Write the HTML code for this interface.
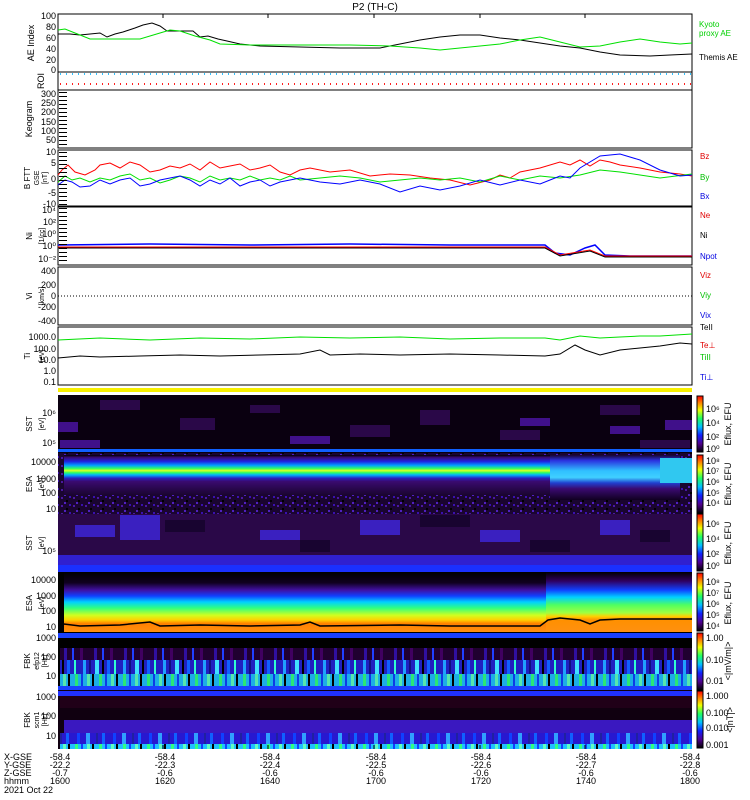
<!DOCTYPE html>
<html><head><meta charset="utf-8"><style>
html,body{margin:0;padding:0;background:#fff;}
svg{display:block;font-family:"Liberation Sans",sans-serif;}
text{font-size:9px;fill:#000;}
</style></head><body>
<svg width="750" height="800" viewBox="0 0 750 800" xmlns="http://www.w3.org/2000/svg">
<defs>
<linearGradient id="esai" x1="0" y1="0" x2="0" y2="1">
<stop offset="0" stop-color="#000"/><stop offset="0.06" stop-color="#3a0a70"/><stop offset="0.16" stop-color="#2020e0"/>
<stop offset="0.26" stop-color="#00a0ff"/><stop offset="0.34" stop-color="#30ff60"/><stop offset="0.39" stop-color="#e0ff20"/>
<stop offset="0.44" stop-color="#30ff60"/><stop offset="0.5" stop-color="#00b0ff"/><stop offset="0.58" stop-color="#2a20c0"/>
<stop offset="0.66" stop-color="#3a0a70"/><stop offset="1" stop-color="#1a0530"/></linearGradient>
<linearGradient id="esai2" x1="0" y1="0" x2="0" y2="1">
<stop offset="0" stop-color="#1a0530"/><stop offset="0.12" stop-color="#2a30e0"/><stop offset="0.35" stop-color="#30c0ff"/>
<stop offset="0.5" stop-color="#40d0ff"/><stop offset="0.62" stop-color="#2040d0"/><stop offset="0.75" stop-color="#3a0a70"/><stop offset="1" stop-color="#100020"/></linearGradient>
<linearGradient id="esae" x1="0" y1="0" x2="0" y2="1">
<stop offset="0" stop-color="#000"/><stop offset="0.18" stop-color="#100020"/><stop offset="0.3" stop-color="#4010a0"/>
<stop offset="0.4" stop-color="#1040ff"/><stop offset="0.5" stop-color="#00d0ff"/><stop offset="0.6" stop-color="#30ff80"/>
<stop offset="0.72" stop-color="#d0ff20"/><stop offset="0.8" stop-color="#ffd000"/><stop offset="0.86" stop-color="#ff8000"/><stop offset="1" stop-color="#ff9010"/></linearGradient>
<linearGradient id="esae2" x1="0" y1="0" x2="0" y2="1">
<stop offset="0" stop-color="#000"/><stop offset="0.15" stop-color="#300060"/><stop offset="0.3" stop-color="#1040ff"/>
<stop offset="0.42" stop-color="#00d0ff"/><stop offset="0.55" stop-color="#50ff60"/><stop offset="0.68" stop-color="#a0ff40"/>
<stop offset="0.74" stop-color="#ffd000"/><stop offset="0.8" stop-color="#ff9000"/><stop offset="1" stop-color="#ff9010"/></linearGradient>
<linearGradient id="cb1" x1="0" y1="1" x2="0" y2="0">
<stop offset="0" stop-color="#000"/><stop offset="0.15" stop-color="#500090"/><stop offset="0.3" stop-color="#1020ff"/>
<stop offset="0.45" stop-color="#00c0ff"/><stop offset="0.6" stop-color="#20ff60"/><stop offset="0.75" stop-color="#f0ff00"/>
<stop offset="0.88" stop-color="#ff8000"/><stop offset="1" stop-color="#ff0000"/></linearGradient>
<pattern id="fbk" width="40" height="10" patternUnits="userSpaceOnUse">
<rect width="40" height="10" fill="#2020c0"/><rect x="3" width="3" height="10" fill="#20a0ff"/><rect x="9" width="2" height="10" fill="#101080"/>
<rect x="15" width="4" height="10" fill="#40e0ff"/><rect x="22" width="2" height="10" fill="#000"/><rect x="27" width="3" height="10" fill="#1060ff"/><rect x="34" width="2" height="10" fill="#30ffd0"/></pattern>
<pattern id="fbkp" width="30" height="10" patternUnits="userSpaceOnUse">
<rect width="30" height="10" fill="#200030"/><rect x="4" width="3" height="10" fill="#3010a0"/><rect x="12" width="2" height="10" fill="#2040ff"/><rect x="20" width="3" height="10" fill="#400060"/></pattern>
<pattern id="fbkg" width="24" height="10" patternUnits="userSpaceOnUse">
<rect width="24" height="10" fill="#20c0ff"/><rect x="3" width="3" height="10" fill="#30ff80"/><rect x="9" width="2" height="10" fill="#1040ff"/><rect x="15" width="3" height="10" fill="#60ffc0"/><rect x="20" width="2" height="10" fill="#000"/></pattern>
<pattern id="fbk2" width="36" height="10" patternUnits="userSpaceOnUse">
<rect width="36" height="10" fill="#2818d0"/><rect x="5" width="3" height="10" fill="#1040ff"/><rect x="14" width="4" height="10" fill="#30a0ff"/><rect x="24" width="2" height="10" fill="#2020a0"/><rect x="30" width="3" height="10" fill="#1060ff"/></pattern>
<pattern id="noise" width="12" height="8" patternUnits="userSpaceOnUse">
<rect width="12" height="8" fill="#1a0530"/><rect x="1" y="1" width="2" height="2" fill="#4a18a0"/><rect x="6" y="4" width="2" height="2" fill="#000"/><rect x="9" y="0" width="2" height="2" fill="#3a10b0"/><rect x="4" y="6" width="2" height="2" fill="#5020c0"/></pattern>
<pattern id="ytk" width="8" height="4" patternUnits="userSpaceOnUse"><rect y="0" width="8" height="1" fill="#000"/></pattern>
</defs>

<text x="375" y="10" text-anchor="middle" style="font-size:10px">P2 (TH-C)</text>

<!-- AE panel -->
<rect x="58" y="14" width="634" height="58" fill="#fff" stroke="#000"/>
<polyline fill="none" stroke="#000" points="58,34 70,34 80,35 100,33 107,37 115,34 123,32 135,28 143,25 152,23 160,26 167,31 180,31 193,31 200,37 208,36 218,39 227,41 240,44 260,46 300,47 340,48 380,48 400,44 420,40 440,37 460,35 480,35 500,38 520,40 540,43 560,46 580,48 600,52 620,55 650,56 670,55 692,54"/>
<polyline fill="none" stroke="#00e000" points="58,30 65,29 75,33 90,39 140,39 160,33 170,30 180,31 195,36 210,40 220,44 250,45 300,45 350,45 390,46 420,48 440,50 470,47 500,44 520,40 540,37 560,42 580,47 600,46 620,42 640,39 660,42 680,44 692,43"/>
<g text-anchor="end"><text x="56" y="19">100</text><text x="56" y="30">80</text><text x="56" y="41">60</text><text x="56" y="52">40</text><text x="56" y="63">20</text><text x="56" y="73">0</text></g>
<text transform="translate(34,43) rotate(-90)" text-anchor="middle">AE Index</text>
<text x="699" y="27" style="fill:#00d000;font-size:8px">Kyoto</text>
<text x="699" y="36" style="fill:#00d000;font-size:8px">proxy AE</text>
<text x="699" y="60" style="font-size:8px">Themis AE</text>

<!-- ROI -->
<rect x="58" y="72" width="634" height="18" fill="#fff" stroke="#000"/>
<line x1="60" y1="74" x2="692" y2="74" stroke="#30c0ff" stroke-dasharray="1,5" stroke-width="2"/>
<line x1="60" y1="84" x2="692" y2="84" stroke="#ff2020" stroke-dasharray="1,5" stroke-width="2"/>
<text transform="translate(44,81) rotate(-90)" text-anchor="middle">ROI</text>

<!-- Keogram -->
<rect x="58" y="90" width="634" height="58" fill="#fff" stroke="#000"/>
<rect x="59" y="91" width="8" height="56" fill="url(#ytk)"/>
<g text-anchor="end"><text x="56" y="97">300</text><text x="56" y="106">250</text><text x="56" y="115">200</text><text x="56" y="125">150</text><text x="56" y="134">100</text><text x="56" y="143">50</text></g>
<text transform="translate(32,119) rotate(-90)" text-anchor="middle">Keogram</text>

<!-- B FTT -->
<rect x="58" y="150" width="634" height="56" fill="#fff" stroke="#000"/>
<polyline fill="none" stroke="#ff0000" points="58,175 62,170 68,165 75,172 85,175 95,170 100,165 110,163 120,168 130,162 140,165 150,172 160,170 170,166 180,168 190,164 200,170 210,162 220,168 230,166 240,164 250,170 260,168 270,165 280,172 290,175 300,170 310,168 330,172 350,170 370,176 390,174 410,175 430,178 450,180 470,185 490,180 500,175 510,178 520,172 540,168 560,162 570,165 580,160 590,166 600,160 610,162 620,165 640,168 660,172 680,174 692,176"/>
<polyline fill="none" stroke="#00e000" points="58,182 65,176 72,180 80,178 90,182 100,178 110,180 120,176 130,174 140,180 150,178 160,183 170,180 180,176 190,178 200,182 210,176 220,180 230,178 240,180 250,176 260,180 270,178 280,180 290,176 300,180 320,178 340,176 360,178 380,182 400,180 420,178 440,180 460,178 480,182 500,176 520,180 540,176 560,178 580,175 600,170 620,172 640,175 660,178 692,174"/>
<polyline fill="none" stroke="#0000ff" points="58,185 65,180 72,182 80,187 90,186 100,180 110,184 120,180 130,178 140,186 150,184 160,180 170,178 180,176 190,180 200,186 210,180 220,184 230,178 240,186 250,182 260,180 270,186 280,182 290,180 300,178 320,182 340,184 360,180 380,184 400,192 420,186 440,190 460,186 480,180 500,185 520,180 540,184 550,180 560,176 570,178 580,168 600,156 620,154 640,160 660,170 680,176 692,175"/>
<rect x="59" y="151" width="8" height="54" fill="url(#ytk)"/>
<g text-anchor="end"><text x="56" y="155">10</text><text x="56" y="166">5</text><text x="56" y="182">0</text><text x="56" y="196">-5</text><text x="56" y="207">-10</text></g>
<text transform="translate(30,178) rotate(-90)" text-anchor="middle" style="font-size:8px">B FTT</text>
<text transform="translate(39,178) rotate(-90)" text-anchor="middle" style="font-size:7px">GSE</text>
<text transform="translate(47,178) rotate(-90)" text-anchor="middle" style="font-size:7px">[nT]</text>
<text x="700" y="159" style="fill:#e00000;font-size:8px">Bz</text>
<text x="700" y="180" style="fill:#00c000;font-size:8px">By</text>
<text x="700" y="199" style="fill:#0000e0;font-size:8px">Bx</text>

<!-- Ni -->
<rect x="58" y="207" width="634" height="58" fill="#fff" stroke="#000"/>
<polyline fill="none" stroke="#0000ff" stroke-width="1.5" points="58,245 150,244 250,245 350,244 450,245 545,245 555,253 570,255 585,248 595,245 605,255 630,256 692,256"/>
<polyline fill="none" stroke="#ff0000" points="58,247 545,247 560,255 590,250 605,256 692,256"/>
<polyline fill="none" stroke="#000" points="58,248 545,248 560,256 590,251 605,257 692,257"/>
<rect x="59" y="208" width="8" height="56" fill="url(#ytk)"/>
<g text-anchor="end" style="font-size:8px"><text x="56" y="213">10⁴</text><text x="56" y="225">10²</text><text x="56" y="237">10⁰</text><text x="56" y="249">10⁰</text><text x="56" y="262">10⁻²</text></g>
<text transform="translate(32,236) rotate(-90)" text-anchor="middle" style="font-size:8px">Ni</text>
<text transform="translate(44,236) rotate(-90)" text-anchor="middle" style="font-size:7px">[1/cc]</text>
<text x="700" y="218" style="fill:#e00000;font-size:8px">Ne</text>
<text x="700" y="238" style="font-size:8px">Ni</text>
<text x="700" y="259" style="fill:#0000e0;font-size:8px">Npot</text>

<!-- Vi -->
<rect x="58" y="267" width="634" height="58" fill="#fff" stroke="#000"/>
<line x1="58" y1="296" x2="692" y2="296" stroke="#000" stroke-dasharray="1,2"/>
<g text-anchor="end"><text x="56" y="274">400</text><text x="56" y="288">200</text><text x="56" y="299">0</text><text x="56" y="310">-200</text><text x="56" y="324">-400</text></g>
<text transform="translate(32,296) rotate(-90)" text-anchor="middle" style="font-size:8px">Vi</text>
<text transform="translate(44,296) rotate(-90)" text-anchor="middle" style="font-size:7px">[km/s]</text>
<text x="700" y="278" style="fill:#e00000;font-size:8px">Viz</text>
<text x="700" y="298" style="fill:#00c000;font-size:8px">Viy</text>
<text x="700" y="318" style="fill:#0000e0;font-size:8px">Vix</text>

<!-- Ti -->
<rect x="58" y="327" width="634" height="58" fill="#fff" stroke="#000"/>
<polyline fill="none" stroke="#00e000" points="58,340 100,338 150,340 200,338 250,339 300,337 350,338 400,337 450,339 500,338 545,338 560,340 580,336 600,338 620,337 640,336 660,336 692,334"/>
<polyline fill="none" stroke="#000" points="58,358 80,356 100,357 140,356 180,355 220,356 260,355 300,354 320,350 330,355 360,354 400,355 450,354 500,355 545,356 560,354 575,345 585,350 600,355 620,350 640,348 660,346 680,343 692,344"/>
<g text-anchor="end" style="font-size:8px"><text x="56" y="340">1000.0</text><text x="56" y="352">100.0</text><text x="56" y="363">10.0</text><text x="56" y="374">1.0</text><text x="56" y="385">0.1</text></g>
<text transform="translate(30,356) rotate(-90)" text-anchor="middle" style="font-size:8px">Ti</text>
<text transform="translate(44,356) rotate(-90)" text-anchor="middle" style="font-size:7px">[eV]</text>
<text x="700" y="330" style="font-size:8px">TeII</text>
<text x="700" y="348" style="fill:#e00000;font-size:8px">Te⊥</text>
<text x="700" y="360" style="fill:#00c000;font-size:8px">TiII</text>
<text x="700" y="380" style="fill:#0000e0;font-size:8px">Ti⊥</text>

<!-- yellow bar -->
<rect x="58" y="388" width="634" height="4" fill="#f8f000"/>

<!-- SST ion -->
<rect x="58" y="395" width="634" height="58" fill="#0a0010"/>
<g fill="#2a0848">
<rect x="100" y="400" width="40" height="10"/><rect x="180" y="418" width="35" height="12"/><rect x="250" y="405" width="30" height="8"/><rect x="350" y="425" width="40" height="12"/><rect x="420" y="410" width="30" height="15"/><rect x="500" y="430" width="40" height="10"/><rect x="600" y="405" width="40" height="10"/><rect x="640" y="440" width="50" height="8"/>
</g>
<g fill="#40108a"><rect x="58" y="422" width="20" height="10"/><rect x="60" y="440" width="40" height="8"/><rect x="290" y="436" width="40" height="8"/><rect x="520" y="418" width="30" height="8"/><rect x="610" y="426" width="30" height="8"/><rect x="665" y="420" width="27" height="10"/></g>
<rect x="58" y="449" width="634" height="3" fill="#1060ff"/>
<g text-anchor="end" style="font-size:8px"><text x="56" y="416">10⁶</text><text x="56" y="446">10⁵</text></g>
<text transform="translate(32,424) rotate(-90)" text-anchor="middle" style="font-size:8px">SST</text>
<text transform="translate(44,424) rotate(-90)" text-anchor="middle" style="font-size:7px">[eV]</text>

<!-- ESA ion -->
<rect x="58" y="453" width="634" height="61" fill="url(#noise)"/>
<rect x="64" y="455" width="486" height="40" fill="url(#esai)" />
<rect x="64" y="495" width="486" height="19" fill="url(#noise)"/>
<rect x="550" y="455" width="130" height="45" fill="url(#esai2)"/>
<rect x="660" y="458" width="32" height="25" fill="#30c8f0"/>
<g text-anchor="end" style="font-size:8px"><text x="56" y="465">10000</text><text x="56" y="482">1000</text><text x="56" y="496">100</text><text x="56" y="512">10</text></g>
<text transform="translate(32,484) rotate(-90)" text-anchor="middle" style="font-size:8px">ESA</text>
<text transform="translate(44,484) rotate(-90)" text-anchor="middle" style="font-size:7px">[eV]</text>

<!-- SST elec -->
<rect x="58" y="514" width="634" height="58" fill="#2a0848"/>
<g fill="#3a20c0"><rect x="75" y="525" width="40" height="12"/><rect x="120" y="515" width="40" height="25"/><rect x="260" y="530" width="40" height="10"/><rect x="360" y="520" width="40" height="15"/><rect x="480" y="530" width="40" height="12"/><rect x="600" y="520" width="30" height="15"/></g>
<g fill="#180430"><rect x="165" y="520" width="40" height="12"/><rect x="300" y="540" width="30" height="12"/><rect x="420" y="515" width="50" height="12"/><rect x="530" y="540" width="40" height="12"/><rect x="640" y="530" width="30" height="12"/></g>
<rect x="58" y="555" width="634" height="17" fill="#3020d0"/>
<rect x="58" y="565" width="634" height="7" fill="#1a30ff"/>
<g text-anchor="end" style="font-size:8px"><text x="56" y="554">10⁵</text></g>
<text transform="translate(32,543) rotate(-90)" text-anchor="middle" style="font-size:8px">SST</text>
<text transform="translate(44,543) rotate(-90)" text-anchor="middle" style="font-size:7px">[eV]</text>

<!-- ESA elec -->
<rect x="58" y="572" width="634" height="60" fill="#000"/>
<rect x="64" y="572" width="482" height="60" fill="url(#esae)"/>
<rect x="546" y="572" width="146" height="60" fill="url(#esae2)"/>
<polyline fill="none" stroke="#000" stroke-width="1.5" points="60,628 64,624 80,626 120,625 150,622 160,626 200,625 250,626 300,625 310,622 320,626 400,625 450,626 500,626 540,626 548,620 560,618 580,620 590,624 600,620 620,619 692,619"/>
<g text-anchor="end" style="font-size:8px"><text x="56" y="583">10000</text><text x="56" y="599">1000</text><text x="56" y="614">100</text><text x="56" y="630">10</text></g>
<text transform="translate(32,603) rotate(-90)" text-anchor="middle" style="font-size:8px">ESA</text>
<text transform="translate(44,603) rotate(-90)" text-anchor="middle" style="font-size:7px">[eV]</text>

<!-- FBK 1 -->
<rect x="58" y="632" width="634" height="58" fill="#000"/>
<rect x="58" y="633" width="634" height="5" fill="#1a40ff"/>
<rect x="60" y="648" width="632" height="12" fill="url(#fbkp)"/>
<rect x="60" y="660" width="632" height="14" fill="url(#fbk)"/>
<rect x="60" y="674" width="632" height="12" fill="url(#fbkg)" opacity="0.9"/>
<rect x="58" y="686" width="634" height="4" fill="#1a40ff"/>
<g text-anchor="end" style="font-size:8px"><text x="56" y="641">1000</text><text x="56" y="660">100</text><text x="56" y="679">10</text></g>
<text transform="translate(30,661) rotate(-90)" text-anchor="middle" style="font-size:8px">FBK</text>
<text transform="translate(39,661) rotate(-90)" text-anchor="middle" style="font-size:7px">efp12</text>
<text transform="translate(47,661) rotate(-90)" text-anchor="middle" style="font-size:7px">[Hz]</text>

<!-- FBK 2 -->
<rect x="58" y="690" width="634" height="59" fill="#100010"/>
<rect x="58" y="691" width="634" height="5" fill="#2030ff"/>
<rect x="60" y="696" width="632" height="12" fill="#200018"/>
<rect x="64" y="720" width="628" height="13" fill="#3a18c0"/>
<rect x="60" y="733" width="632" height="11" fill="url(#fbk2)"/>
<rect x="60" y="744" width="632" height="5" fill="url(#fbkg)"/>
<g text-anchor="end" style="font-size:8px"><text x="56" y="700">1000</text><text x="56" y="719">100</text><text x="56" y="739">10</text></g>
<text transform="translate(30,720) rotate(-90)" text-anchor="middle" style="font-size:8px">FBK</text>
<text transform="translate(39,720) rotate(-90)" text-anchor="middle" style="font-size:7px">scm1</text>
<text transform="translate(47,720) rotate(-90)" text-anchor="middle" style="font-size:7px">[Hz]</text>

<!-- colorbars -->
<g stroke="#000"><rect x="697" y="396" width="6" height="56" fill="url(#cb1)"/><rect x="697" y="455" width="6" height="58" fill="url(#cb1)"/><rect x="697" y="514" width="6" height="57" fill="url(#cb1)"/><rect x="697" y="573" width="6" height="58" fill="url(#cb1)"/><rect x="697" y="633" width="6" height="57" fill="url(#cb1)"/><rect x="697" y="691" width="6" height="57" fill="url(#cb1)"/></g>
<g style="font-size:7px">
<text x="706" y="412">10⁶</text><text x="706" y="426">10⁴</text><text x="706" y="440">10²</text><text x="706" y="452">10⁰</text>
<text x="706" y="464">10⁸</text><text x="706" y="474">10⁷</text><text x="706" y="485">10⁶</text><text x="706" y="496">10⁵</text><text x="706" y="506">10⁴</text>
<text x="706" y="527">10⁶</text><text x="706" y="542">10⁴</text><text x="706" y="557">10²</text><text x="706" y="569">10⁰</text>
<text x="706" y="585">10⁸</text><text x="706" y="596">10⁷</text><text x="706" y="607">10⁶</text><text x="706" y="618">10⁵</text><text x="706" y="629">10⁴</text>
<text x="706" y="641">1.00</text><text x="706" y="663">0.10</text><text x="706" y="684">0.01</text>
<text x="706" y="699">1.000</text><text x="706" y="716">0.100</text><text x="706" y="731">0.010</text><text x="706" y="748">0.001</text>
</g>
<g style="font-size:7px">
<text transform="translate(731,424) rotate(-90)" text-anchor="middle">Eflux, EFU</text>
<text transform="translate(731,484) rotate(-90)" text-anchor="middle">Eflux, EFU</text>
<text transform="translate(731,543) rotate(-90)" text-anchor="middle">Eflux, EFU</text>
<text transform="translate(731,603) rotate(-90)" text-anchor="middle">Eflux, EFU</text>
<text transform="translate(731,661) rotate(-90)" text-anchor="middle">&lt;|mV/m|&gt;</text>
<text transform="translate(733,720) rotate(-90)" text-anchor="middle">&lt;|nT|&gt;</text>
</g>

<!-- ticks -->
<g stroke="#000">
<line x1="163" y1="14" x2="163" y2="18"/><line x1="268" y1="14" x2="268" y2="18"/><line x1="374" y1="14" x2="374" y2="18"/><line x1="480" y1="14" x2="480" y2="18"/><line x1="585" y1="14" x2="585" y2="18"/>
<line x1="163" y1="745" x2="163" y2="749"/><line x1="268" y1="745" x2="268" y2="749"/><line x1="374" y1="745" x2="374" y2="749"/><line x1="480" y1="745" x2="480" y2="749"/><line x1="585" y1="745" x2="585" y2="749"/>
</g>

<!-- bottom labels -->
<g style="font-size:9px">
<text x="4" y="760">X-GSE</text><text x="4" y="768">Y-GSE</text><text x="4" y="776">Z-GSE</text><text x="4" y="784">hhmm</text><text x="4" y="793">2021 Oct 22</text>
</g>
<g style="font-size:9px" text-anchor="middle">
<text x="60" y="760">-58.4</text><text x="60" y="768">-22.2</text><text x="60" y="776">-0.7</text><text x="60" y="784">1600</text>
<text x="165" y="760">-58.4</text><text x="165" y="768">-22.3</text><text x="165" y="776">-0.6</text><text x="165" y="784">1620</text>
<text x="270" y="760">-58.4</text><text x="270" y="768">-22.4</text><text x="270" y="776">-0.6</text><text x="270" y="784">1640</text>
<text x="376" y="760">-58.4</text><text x="376" y="768">-22.5</text><text x="376" y="776">-0.6</text><text x="376" y="784">1700</text>
<text x="481" y="760">-58.4</text><text x="481" y="768">-22.6</text><text x="481" y="776">-0.6</text><text x="481" y="784">1720</text>
<text x="586" y="760">-58.4</text><text x="586" y="768">-22.7</text><text x="586" y="776">-0.6</text><text x="586" y="784">1740</text>
<text x="690" y="760">-58.4</text><text x="690" y="768">-22.8</text><text x="690" y="776">-0.6</text><text x="690" y="784">1800</text>
</g>
</svg>
</body></html>
